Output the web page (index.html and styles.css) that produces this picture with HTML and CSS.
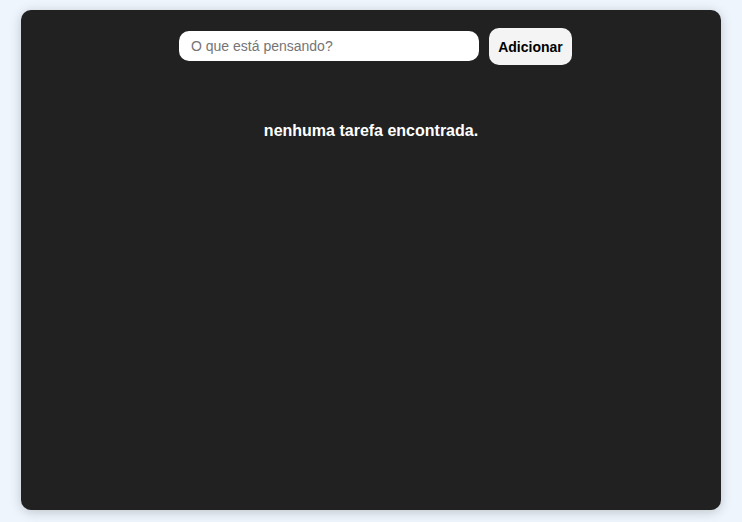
FILE: index.html
```html
<!DOCTYPE html>
<html lang="pt">
<head>
<meta charset="utf-8">
<title>Tarefas</title>
<link rel="stylesheet" href="styles.css">
</head>
<body>
<main class="card">
  <form class="add-row">
    <input class="task-input" type="text" placeholder="O que está pensando?">
    <button class="add-btn" type="button">Adicionar</button>
  </form>
  <p class="empty">nenhuma tarefa encontrada.</p>
</main>
</body>
</html>
```
FILE: styles.css
```css
html, body {
  margin: 0;
  padding: 0;
}
body {
  background: #eef5fc;
  font-family: "Liberation Sans", Arial, sans-serif;
  padding: 10px 21px 12px;
}
.card {
  width: 700px;
  height: 500px;
  box-sizing: border-box;
  background: #212121;
  border-radius: 10px;
  box-shadow: 0 2px 12px rgba(0, 0, 0, 0.2);
  padding-top: 18px;
}
.add-row {
  display: flex;
  justify-content: center;
  align-items: flex-start;
  gap: 10px;
  margin: 0 0 0 9px;
}
.task-input {
  width: 300px;
  height: 30px;
  margin-top: 3px;
  box-sizing: border-box;
  border: none;
  border-radius: 10px;
  padding: 0 12px;
  font-family: "Liberation Sans", Arial, sans-serif;
  font-size: 14px;
  color: #222;
  background: #fff;
  outline: none;
}
.task-input::placeholder {
  color: #757575;
}
.add-btn {
  height: 37px;
  width: 83px;
  box-sizing: border-box;
  border: none;
  border-radius: 10px;
  background: #f4f4f4;
  font-family: "Liberation Sans", Arial, sans-serif;
  font-weight: bold;
  font-size: 14px;
  color: #000;
  padding: 0;
}
.empty {
  margin: 57px 0 0;
  text-align: center;
  color: #fff;
  font-weight: bold;
  font-size: 16px;
}
```
